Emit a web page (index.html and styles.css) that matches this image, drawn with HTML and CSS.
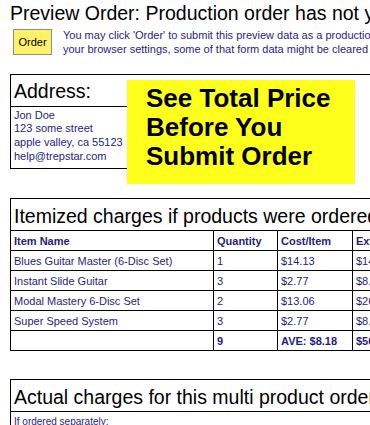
FILE: index.html
```html
<!DOCTYPE html>
<html>
<head>
<meta charset="utf-8">
<link rel="stylesheet" href="styles.css">
</head>
<body>
<h1 class="page-title">Preview Order: Production order has not yet been submitted</h1>
<div class="intro">
  <button class="order-btn" type="button">Order</button>
  <p class="intro-text">You may click 'Order' to submit this preview data as a production order. Depending on<br>your browser settings, some of that form data might be cleared if you go back.</p>
</div>

<div class="address-section">
  <div class="address-card">
    <div class="section-head">Address:</div>
    <div class="address-lines">
      Jon Doe<br>
      123 some street<br>
      apple valley, ca 55123<br>
      help@trepstar.com
    </div>
  </div>
  <div class="callout">See Total Price<br>Before You<br>Submit Order</div>
</div>

<table class="charges">
  <colgroup>
    <col class="c-name"><col class="c-qty"><col class="c-cost"><col class="c-ext">
  </colgroup>
  <tr><th colspan="4" class="table-title">Itemized charges if products were ordered separately</th></tr>
  <tr class="head-row"><td>Item Name</td><td>Quantity</td><td>Cost/Item</td><td>Ext. Price</td></tr>
  <tr><td>Blues Guitar Master (6-Disc Set)</td><td>1</td><td>$14.13</td><td>$14.13</td></tr>
  <tr><td>Instant Slide Guitar</td><td>3</td><td>$2.77</td><td>$8.31</td></tr>
  <tr><td>Modal Mastery 6-Disc Set</td><td>2</td><td>$13.06</td><td>$26.12</td></tr>
  <tr><td>Super Speed System</td><td>3</td><td>$2.77</td><td>$8.31</td></tr>
  <tr class="total-row"><td></td><td>9</td><td>AVE: $8.18</td><td>$56.87</td></tr>
</table>

<table class="charges actual">
  <tr><th class="table-title">Actual charges for this multi product order</th></tr>
  <tr><td class="small-note">If ordered separately:</td></tr>
</table>
</body>
</html>
```

FILE: styles.css
```css
html, body {
  overflow: hidden;
}
body {
  margin: 0;
  padding: 2px 0 0 10px;
  font-family: "Liberation Sans", Arial, sans-serif;
  color: #000;
  background: #fff;
  width: 520px;
}
.page-title {
  margin: 0;
  font-size: 19.5px;
  line-height: 22px;
  font-weight: normal;
  white-space: nowrap;
}
.intro {
  display: flex;
  align-items: flex-start;
  margin-top: 5px;
  padding-left: 3px;
}
.order-btn {
  width: 39px;
  height: 26px;
  padding: 0;
  background: #fff26a;
  border: 1px solid #8c8c8c;
  font-family: "Liberation Sans", Arial, sans-serif;
  font-size: 11px;
  color: #000;
  flex: none;
}
.intro-text {
  margin: -1px 0 0 11px;
  font-size: 11px;
  line-height: 14.3px;
  color: #1e1e82;
  white-space: nowrap;
}
.address-section {
  position: relative;
  margin-top: 17px;
  border-top: 1px solid #000;
  width: 500px;
}
.address-card {
  width: 124px;
  border-left: 1px solid #000;
  border-bottom: 1px solid #000;
}
.section-head {
  padding: 5px 3px 4px;
  font-size: 19.5px;
  line-height: 22px;
  border-bottom: 1px solid #000;
  white-space: nowrap;
}
.address-lines {
  padding: 2px 3px 4px;
  font-size: 11px;
  line-height: 13.75px;
  color: #1e1e82;
  white-space: nowrap;
}
.callout {
  position: absolute;
  left: 117px;
  top: 5px;
  width: 209px;
  height: 100px;
  padding: 4px 0 0 19px;
  background: #ffff1c;
  font-size: 26px;
  line-height: 29px;
  font-weight: bold;
  white-space: nowrap;
}
.charges {
  border-collapse: collapse;
  table-layout: fixed;
  width: 470px;
  margin-top: 29px;
  font-size: 11px;
  color: #1e1e82;
}
.charges td, .charges th {
  border: 1px solid #000;
}
.c-name { width: 203px; }
.c-qty { width: 64px; }
.c-cost { width: 75px; }
.c-ext { width: 128px; }
.table-title {
  padding: 6px 3px 3px;
  font-size: 19.5px;
  line-height: 22px;
  font-weight: normal;
  text-align: left;
  color: #000;
  white-space: nowrap;
  overflow: hidden;
}
.charges td {
  height: 19px;
  padding: 1px 3px 0;
  line-height: 18px;
  vertical-align: top;
  white-space: nowrap;
  overflow: hidden;
  box-sizing: border-box;
}
.head-row td, .total-row td {
  font-weight: bold;
}
.actual {
  margin-top: 28px;
}
.small-note {
  font-size: 10px;
}
```
